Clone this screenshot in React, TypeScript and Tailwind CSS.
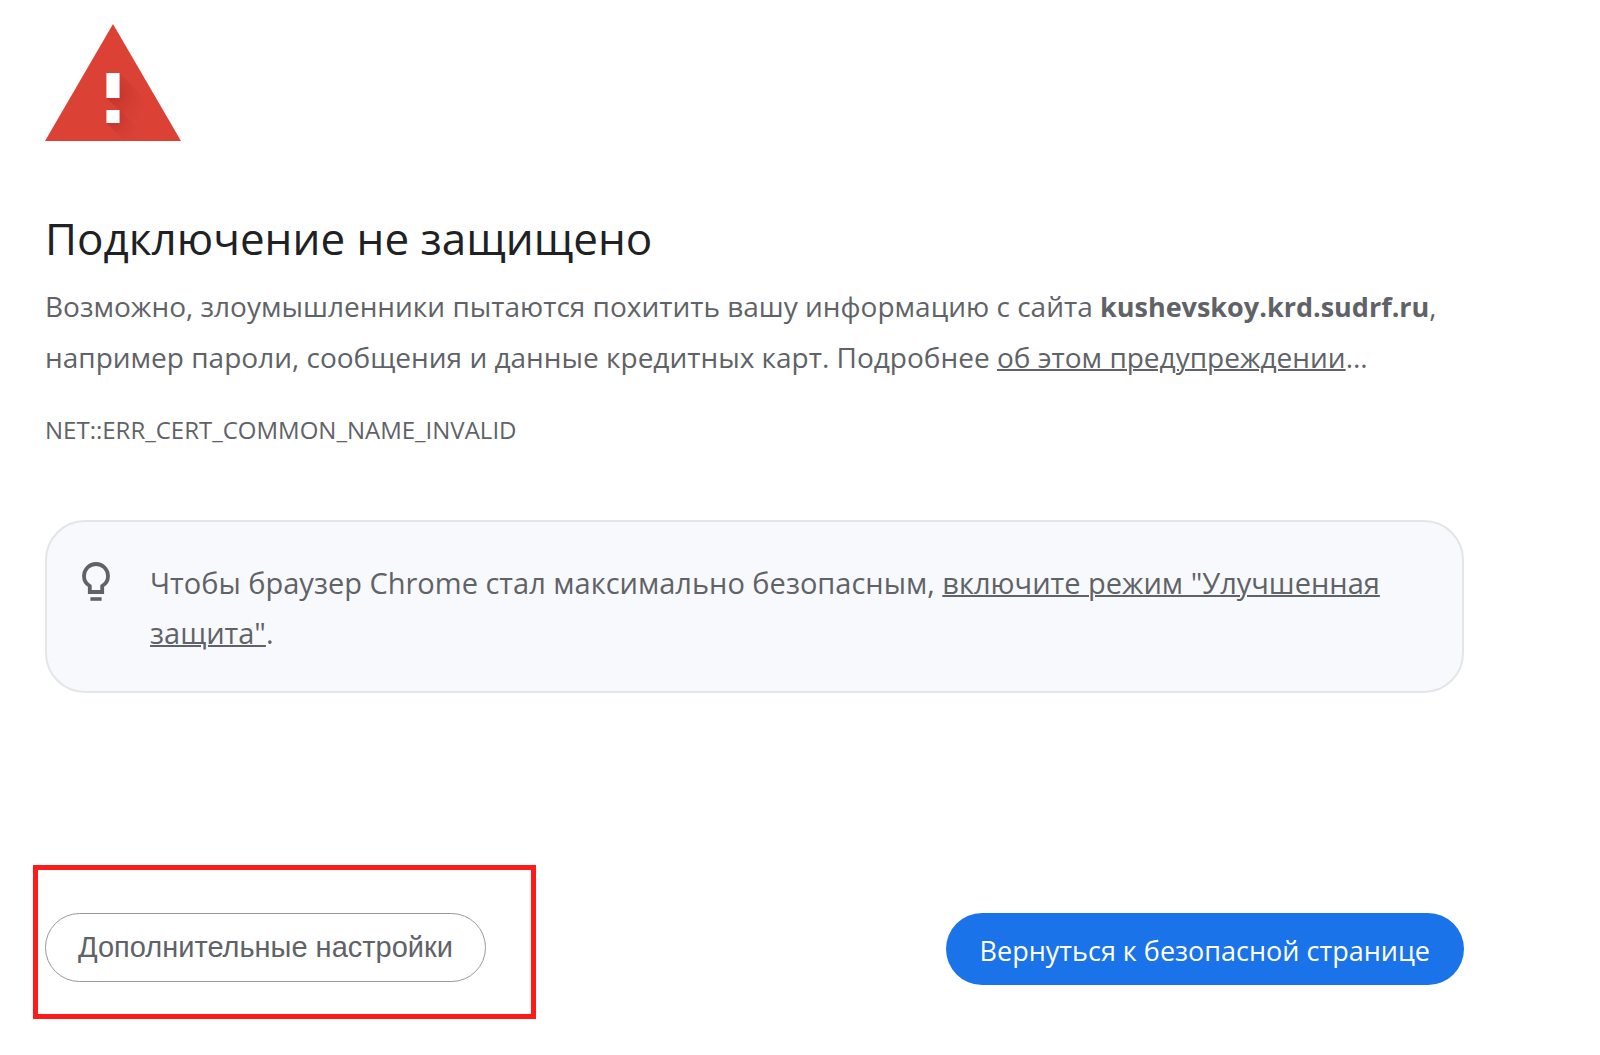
export default function App() {
  return (
    <main className="min-h-screen bg-white px-[45px] pt-6 pb-16 font-['Open_Sans','Noto_Sans',sans-serif] text-[#5f6368]">
      <svg className="block h-[117px] w-[136px]" viewBox="0 0 135 117" preserveAspectRatio="none" aria-hidden="true">
        <defs>
          <radialGradient id="shade" gradientUnits="userSpaceOnUse" cx="67" cy="70" r="42">
            <stop offset="0" stopColor="#a8281f" />
            <stop offset="1" stopColor="#db4437" stopOpacity="0" />
          </radialGradient>
          <radialGradient id="shade-dot" gradientUnits="userSpaceOnUse" cx="67" cy="94" r="32">
            <stop offset="0" stopColor="#a8281f" />
            <stop offset="1" stopColor="#db4437" stopOpacity="0" />
          </radialGradient>
        </defs>
        <path d="M67.5 0 135 117H0Z" fill="#dc4136" />
        <path d="M74 49 118 93V117H104L61 74Z" fill="url(#shade)" opacity="0.6" />
        <path d="M74 86 105 117H79L61 99Z" fill="url(#shade-dot)" opacity="0.6" />
        <path d="M61 49h13v25H61zM61 86h13v13H61z" fill="#fff" />
      </svg>

      <div className="max-w-[1419px]">
        <h1 className="mt-[67px] text-[44px] leading-[60px] text-[#202124]">Подключение не защищено</h1>
        <p className="mt-[13px] text-[28px] leading-[50px]">
          Возможно, злоумышленники пытаются похитить вашу информацию с сайта{' '}
          <b className="text-[27px]">kushevskoy.krd.sudrf.ru</b>, например пароли, сообщения и данные кредитных карт. Подробнее{' '}
          <a href="#warning" className="underline decoration-2">об этом предупреждении</a>...
        </p>
        <p className="mt-[30px] text-[24px] leading-[36px]">NET::ERR_CERT_COMMON_NAME_INVALID</p>

        <section className="mt-[72px] flex items-start gap-[30px] rounded-[40px] border-2 border-[#e3e5e6] bg-[#f8f9fd] pt-9 pr-12 pb-[33px] pl-[25px]">
          <svg className="h-12 w-12 shrink-0" viewBox="0 0 24 24" aria-hidden="true">
            <path d="M12 3a6 6 0 0 0-6 6c0 2.2 1.1 3.9 2.9 5v3h6.2v-3c1.8-1.1 2.9-2.8 2.9-5a6 6 0 0 0-6-6Z" fill="none" stroke="currentColor" strokeWidth="1.9" />
            <path d="M9.2 19.6h5.6v1.8H9.2z" fill="currentColor" />
          </svg>
          <p className="text-[29px] leading-[50px]">
            Чтобы браузер Chrome стал максимально безопасным,{' '}
            <a href="#protection" className="underline decoration-2">включите режим "Улучшенная защита"</a>.
          </p>
        </section>

        <div className="mt-[220px] flex items-start justify-between">
          <div className="relative">
            <button className="h-[69px] rounded-full border border-[#98999b] px-8 font-['Liberation_Sans',sans-serif] text-[29px]">
              Дополнительные настройки
            </button>
            <div className="pointer-events-none absolute -top-12 -right-[50px] -bottom-[37px] -left-3 border-[5px] border-[#ff1a1a]" />
          </div>
          <button className="h-[72px] rounded-full bg-[#1a73e8] px-[34px] pt-1 text-[27px] text-white">
            Вернуться к безопасной странице
          </button>
        </div>
      </div>
    </main>
  )
}
